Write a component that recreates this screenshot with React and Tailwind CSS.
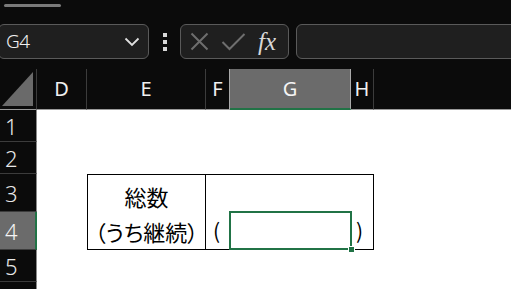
import React from "react";

const jp = { fontFamily: '"Noto Sans CJK JP", "Noto Sans", sans-serif' };

function HeaderCell({ children, className = "" }) {
  return (
    <div className={`flex items-center justify-center border-r border-[#3c3c3c] text-[20px] text-[#f0f0f0] ${className}`}>
      {children}
    </div>
  );
}

function RowHead({ n, h, active }) {
  return (
    <div
      className={`flex items-center pl-[5px] text-[22px] font-light leading-none border-b border-[#3c3c3c] ${
        active ? "bg-[#6b6b6b] text-[#f4f4f4] border-r-2 border-r-[#217346]" : "text-[#e8e8e8] border-r border-r-[#8a8a8a]"
      } ${h}`}
    >
      {n}
    </div>
  );
}

export default function App() {
  return (
    <div className="w-[511px] h-[289px] overflow-hidden bg-[#0b0b0b] flex flex-col" style={{ fontFamily: '"Noto Sans", "Open Sans", sans-serif' }}>
      {/* top band */}
      <div className="h-[24px] shrink-0 pt-[4px] pl-[4px]">
        <div className="w-[57px] h-[3px] rounded-full bg-[#7a7a7a]" />
      </div>

      {/* formula bar */}
      <div className="h-[35px] shrink-0 flex items-stretch">
        <div className="-ml-[2px] w-[151px] flex items-center justify-between rounded-[6px] border border-[#5a5a5a] bg-[#1f1f1f] pl-[7px] pr-[7px]">
          <span className="text-[19px] text-[#f0f0f0] font-light tracking-tight">G4</span>
          <svg width="16" height="10" viewBox="0 0 16 10" className="mr-[1px]">
            <path d="M1.5 1.5 L8 8 L14.5 1.5" fill="none" stroke="#e0e0e0" strokeWidth="1.8" />
          </svg>
        </div>
        <div className="w-[31px] flex flex-col items-center justify-center gap-[3px]">
          <div className="w-[4px] h-[4px] bg-[#d8d8d8]" />
          <div className="w-[4px] h-[4px] bg-[#d8d8d8]" />
          <div className="w-[4px] h-[4px] bg-[#d8d8d8]" />
        </div>
        <div className="w-[109px] flex items-center rounded-[6px] border border-[#5a5a5a] bg-[#1f1f1f] pl-[9px]">
          <svg width="19" height="19" viewBox="0 0 19 19">
            <path d="M1.5 1.5 L17.5 17.5 M17.5 1.5 L1.5 17.5" stroke="#6e6e6e" strokeWidth="2" />
          </svg>
          <svg width="25" height="19" viewBox="0 0 25 19" className="ml-[12px]">
            <path d="M1.5 10 L8.5 17 L23.5 2" fill="none" stroke="#6e6e6e" strokeWidth="2" />
          </svg>
          <span className="ml-[12px] text-[25px] italic text-[#d8d8d8] leading-none" style={{ fontFamily: '"Liberation Serif", "DejaVu Serif", serif' }}>
            fx
          </span>
        </div>
        <div className="ml-[7px] flex-1 -mr-[10px] rounded-[6px] border border-[#5a5a5a] bg-[#1f1f1f]" />
      </div>

      <div className="h-[10px] shrink-0" />

      {/* sheet grid */}
      <div className="flex-1 grid grid-cols-[37px_50px_119px_24px_121px_23px_1fr] grid-rows-[41px_1fr]">
        {/* header row */}
        <div className="flex items-end justify-end border-r border-[#3c3c3c] border-b border-b-[#9a9a9a] pr-[3px] pb-[3px]">
          <svg width="31" height="34" viewBox="0 0 31 34">
            <polygon points="31,0 31,34 0,34" fill="#6a6a6a" />
          </svg>
        </div>
        <HeaderCell className="border-b border-b-[#9a9a9a]">D</HeaderCell>
        <HeaderCell className="border-b border-b-[#9a9a9a]">E</HeaderCell>
        <HeaderCell className="border-b border-b-[#9a9a9a] border-r-[#aaaaaa]">F</HeaderCell>
        <div className="flex items-center justify-center bg-[#6b6b6b] text-[20px] text-[#f4f4f4] border-b-2 border-[#217346] border-r border-r-[#aaaaaa]">G</div>
        <HeaderCell className="border-b border-b-[#9a9a9a]">H</HeaderCell>
        <div className="border-b border-b-[#9a9a9a]" />

        {/* row headers */}
        <div className="flex flex-col">
          <RowHead n="1" h="h-[32px]" />
          <RowHead n="2" h="h-[32px]" />
          <RowHead n="3" h="h-[38px]" />
          <RowHead n="4" h="h-[38px]" active />
          <RowHead n="5" h="h-[32px]" />
          <RowHead n="6" h="h-[32px]" />
        </div>

        {/* cells */}
        <div className="col-span-6 bg-white grid grid-cols-[50px_119px_24px_121px_23px_1fr] grid-rows-[32px_32px_38px_38px_1fr]" style={jp}>
          <div className="col-span-6" />
          <div className="col-span-6" />
          <div />
          <div className="flex items-end justify-center border-l border-t border-r border-black text-[22px] text-black leading-none pb-[5px]">総数</div>
          <div className="col-span-3 border-t border-r border-black" />
          <div />
          <div />
          <div className="flex items-center justify-center border-l border-b border-r border-black text-[22px] text-black leading-none whitespace-nowrap [font-feature-settings:'palt']">
            （うち継続）
          </div>
          <div className="flex items-center pl-[7px] border-b border-black text-[21px] text-black">(</div>
          <div className="relative border-b border-black">
            <div className="absolute -left-[1px] -top-[1px] -right-[1px] -bottom-[1px] border-2 border-[#217346]" />
            <div className="absolute -right-[4px] -bottom-[4px] w-[7px] h-[7px] bg-[#217346] border border-white" />
          </div>
          <div className="flex items-center pl-[5px] border-b border-r border-black text-[21px] text-black">)</div>
          <div />
          <div className="col-span-6" />
        </div>
      </div>
    </div>
  );
}
